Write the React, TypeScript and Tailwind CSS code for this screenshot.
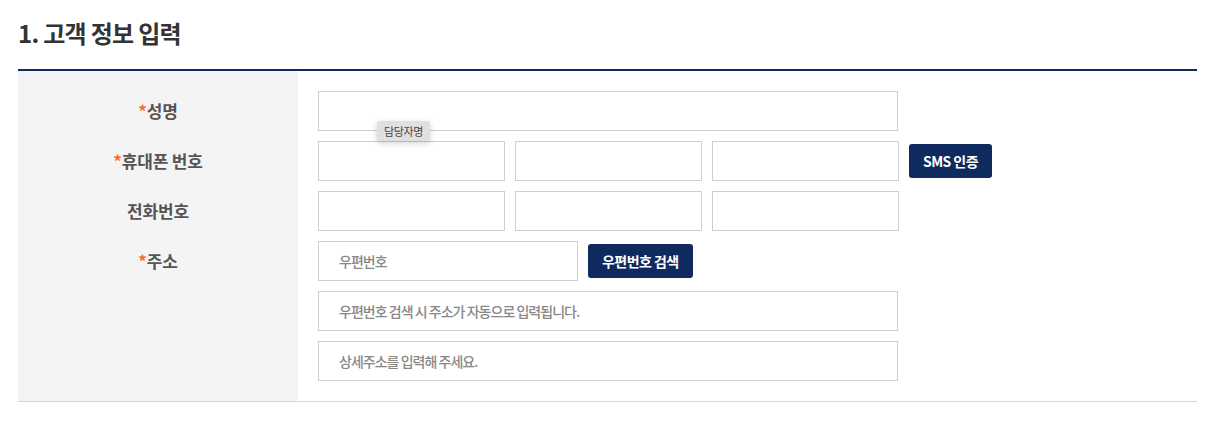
import React from 'react';

const font = { fontFamily: '"Noto Sans CJK KR", "Noto Sans", sans-serif' };

function Label({ text, required }: { text: string; required?: boolean }) {
  return (
    <div className="flex h-10 items-center justify-center text-[17px] font-bold tracking-[-0.01em] text-[#555]">
      {required && <span className="text-[#ff6b1a]">*</span>}
      {text}
    </div>
  );
}

function Field({ w, placeholder }: { w: string; placeholder?: string }) {
  return (
    <input
      className={`${w} h-10 border border-[#cfcfcf] bg-white px-5 text-[14px] font-medium tracking-[-0.07em] text-[#333] placeholder:text-[#888] outline-none`}
      placeholder={placeholder}
      style={font}
    />
  );
}

function Btn({ children }: { children: React.ReactNode }) {
  return (
    <button
      className="h-[34px] rounded-[3px] bg-[#0f2a5e] px-[14px] text-[14px] font-bold tracking-[-0.04em] text-white"
      style={font}
    >
      {children}
    </button>
  );
}

export default function App() {
  return (
    <div className="min-h-screen bg-white px-[18px] pt-[17px]" style={font}>
      <h2 className="text-[24px] font-bold leading-[32px] tracking-[-0.03em] text-[#333]">
        1. 고객 정보 입력
      </h2>
      <div className="mt-[20px] w-[1179px] border-t-2 border-b border-t-[#0f2a5e] border-b-[#d6d6d6]">
        <div className="flex">
          <div className="flex w-[280px] flex-col gap-[10px] bg-[#f4f4f4] pt-5">
            <Label text="성명" required />
            <Label text="휴대폰 번호" required />
            <Label text="전화번호" />
            <Label text="주소" required />
          </div>
          <div className="relative flex flex-col gap-[10px] py-5 pl-5">
            <div className="flex">
              <Field w="w-[580px]" />
            </div>
            <div className="flex items-center gap-[10px]">
              <Field w="w-[187px]" />
              <Field w="w-[187px]" />
              <Field w="w-[187px]" />
              <Btn>SMS 인증</Btn>
            </div>
            <div className="flex gap-[10px]">
              <Field w="w-[187px]" />
              <Field w="w-[187px]" />
              <Field w="w-[187px]" />
            </div>
            <div className="flex items-center gap-[10px]">
              <Field w="w-[260px]" placeholder="우편번호" />
              <Btn>우편번호 검색</Btn>
            </div>
            <div className="flex">
              <Field w="w-[580px]" placeholder="우편번호 검색 시 주소가 자동으로 입력됩니다." />
            </div>
            <div className="flex">
              <Field w="w-[580px]" placeholder="상세주소를 입력해 주세요." />
            </div>
            <div className="absolute left-[79px] top-[50px] rounded-[3px] bg-[#e3dfdf] px-[7px] py-[2px] text-[11px] leading-[16px] tracking-[-0.03em] text-[#444] shadow-[0_2px_6px_rgba(0,0,0,0.18)]">
              담당자명
            </div>
          </div>
        </div>
      </div>
    </div>
  );
}
